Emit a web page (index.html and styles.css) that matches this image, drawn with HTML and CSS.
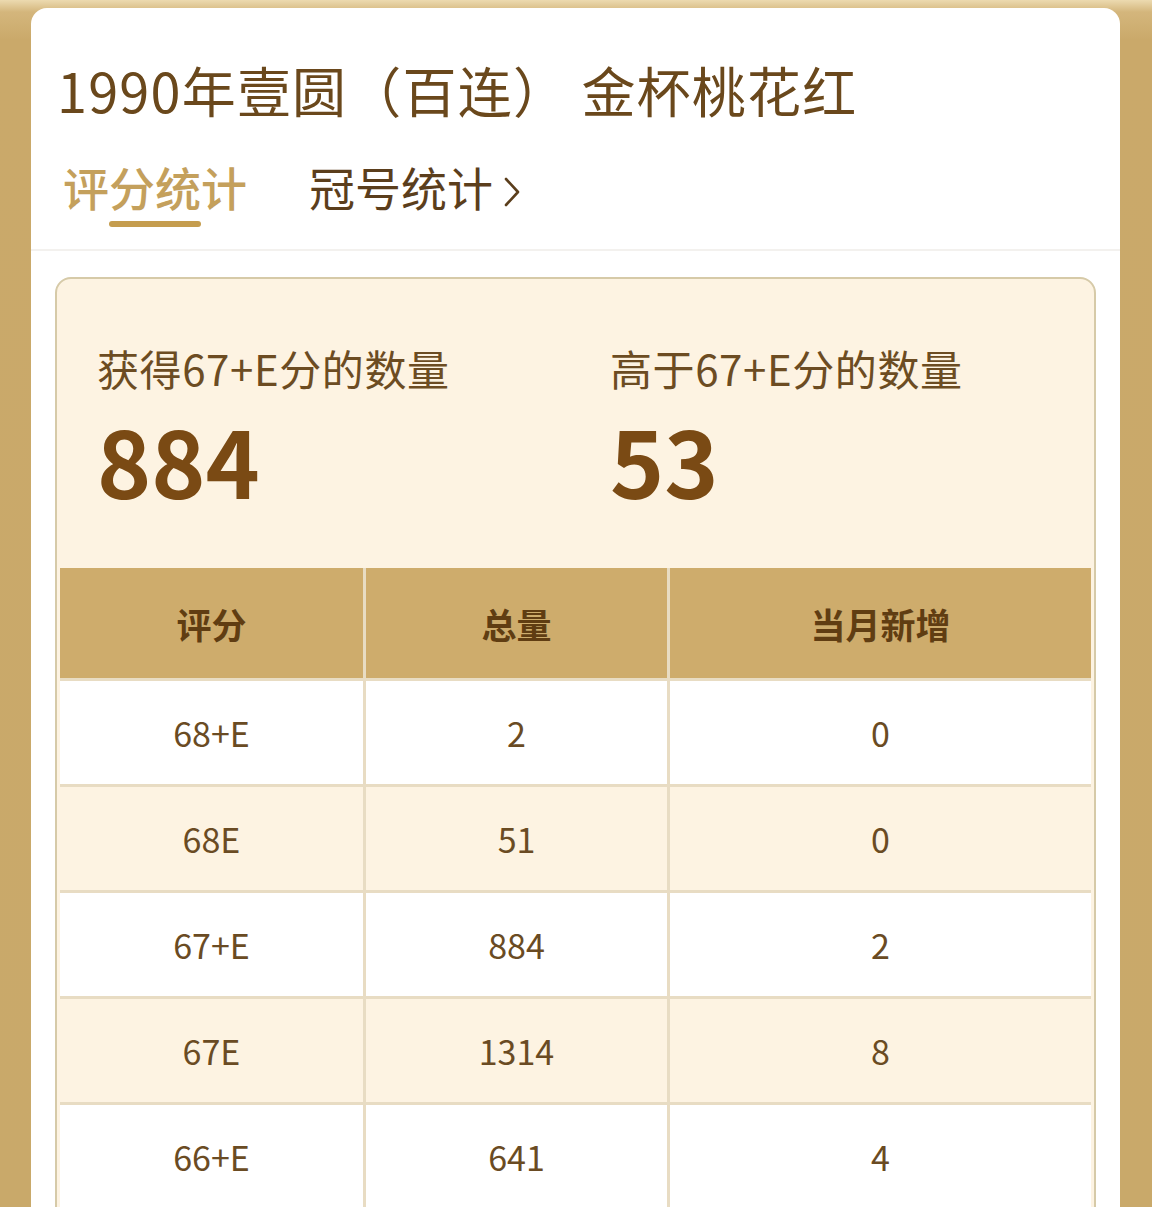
FILE: index.html
```html
<!DOCTYPE html>
<html lang="zh-CN">
<head>
<meta charset="utf-8">
<title>评分统计</title>
<link rel="stylesheet" href="styles.css">
</head>
<body>
<div class="card">
  <h1 class="title">1990年壹圆（百连） 金杯桃花红</h1>
  <div class="tabs">
    <div class="tab tab-active">
      <span class="tab-text">评分统计</span>
      <span class="tab-line"></span>
    </div>
    <div class="tab tab-link">
      <span class="tab-text">冠号统计</span>
      <svg class="chev" width="18" height="30" viewBox="0 0 18 30"><polyline points="3,2 15,15 3,28" fill="none" stroke="#5b3e1c" stroke-width="2.6" stroke-linecap="round" stroke-linejoin="round"/></svg>
    </div>
  </div>
  <div class="sep"></div>
  <div class="panel">
    <div class="stats">
      <div class="stat">
        <div class="stat-label">获得67+E分的数量</div>
        <div class="stat-num">884</div>
      </div>
      <div class="stat">
        <div class="stat-label">高于67+E分的数量</div>
        <div class="stat-num">53</div>
      </div>
    </div>
    <div class="grid">
      <div class="cell head">评分</div>
      <div class="cell head">总量</div>
      <div class="cell head">当月新增</div>

      <div class="cell">68+E</div>
      <div class="cell">2</div>
      <div class="cell">0</div>

      <div class="cell alt">68E</div>
      <div class="cell alt">51</div>
      <div class="cell alt">0</div>

      <div class="cell">67+E</div>
      <div class="cell">884</div>
      <div class="cell">2</div>

      <div class="cell alt">67E</div>
      <div class="cell alt">1314</div>
      <div class="cell alt">8</div>

      <div class="cell">66+E</div>
      <div class="cell">641</div>
      <div class="cell">4</div>
    </div>
  </div>
</div>
</body>
</html>
```

FILE: styles.css
```css
html, body {
  margin: 0;
  padding: 0;
  height: 1207px;
  overflow: hidden;
}
body {
  background: linear-gradient(to bottom, #ecdab0 0px, #d4b67c 12px, #caa96a 40px, #c9a96a 100%);
  font-family: "Noto Sans CJK SC", "Noto Sans", sans-serif;
  padding: 8px 32px 0 31px;
  box-sizing: border-box;
}
.card {
  background: #ffffff;
  border-radius: 16px 16px 0 0;
  height: 1300px;
  box-sizing: border-box;
  padding-top: 44px;
}
.title {
  margin: 0;
  padding-left: 26px;
  font-size: 54px;
  font-weight: 400;
  letter-spacing: 1.2px;
  line-height: 76px;
  color: #6a481c;
  white-space: nowrap;
}
.tabs {
  display: flex;
  align-items: flex-start;
  gap: 62px;
  padding-left: 32px;
  margin-top: 25px;
}
.tab {
  display: flex;
  flex-direction: column;
  align-items: center;
}
.tab-text {
  font-size: 46px;
  line-height: 67px;
  font-weight: 500;
  white-space: nowrap;
}
.tab-active .tab-text {
  color: #c4a05c;
}
.tab-line {
  display: block;
  width: 92px;
  height: 6px;
  border-radius: 3px;
  background: #c59d4e;
  margin-top: 1px;
}
.tab-link {
  flex-direction: row;
  align-items: flex-start;
  gap: 10px;
}
.tab-link .tab-text {
  color: #5b3e1c;
  font-weight: 400;
}
.chev {
  margin-top: 24px;
}
.sep {
  height: 2px;
  background: #f3f1ee;
  margin-top: 22px;
}
.panel {
  margin: 26px 24px 0 24px;
  border: 2px solid #d6caa8;
  border-radius: 16px;
  background: #fdf3e2;
  padding-top: 60px;
  padding-bottom: 60px;
}
.stats {
  display: grid;
  grid-template-columns: 513px 1fr;
  padding-left: 40px;
}
.stat-label {
  font-size: 42px;
  letter-spacing: 0.6px;
  line-height: 58px;
  color: #6c4c22;
  white-space: nowrap;
}
.stat-num {
  margin-top: 16px;
  font-size: 92px;
  line-height: 92px;
  font-weight: 700;
  color: #7a4a14;
}
.grid {
  margin: 63px 3px 0 3px;
  display: grid;
  grid-template-columns: 303px 301px 1fr;
  grid-template-rows: 110px;
  grid-auto-rows: 103px;
  gap: 3px;
  background: #e8dcc3;
}
.cell {
  display: flex;
  align-items: center;
  justify-content: center;
  background: #ffffff;
  font-size: 34px;
  color: #6a4b23;
}
.cell.alt {
  background: #fdf3e2;
}
.cell.head {
  background: #ceac6c;
  font-weight: 700;
  font-size: 35px;
  color: #603d12;
}
```
